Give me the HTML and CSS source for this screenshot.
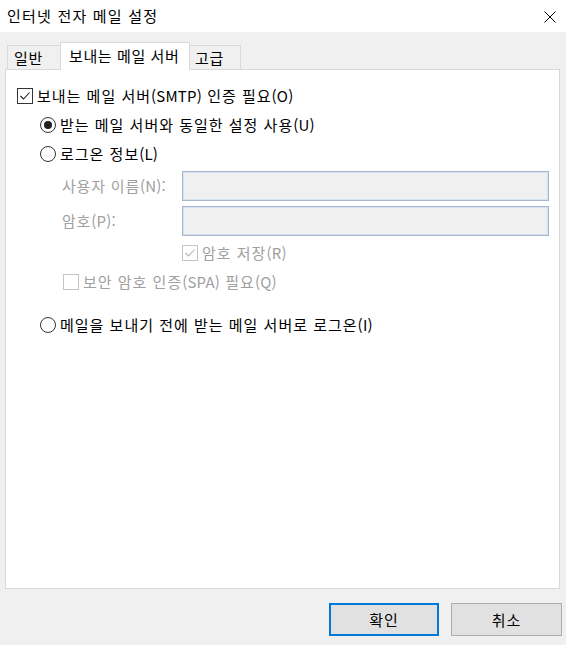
FILE: index.html
```html
<!DOCTYPE html>
<html lang="ko">
<head>
<meta charset="utf-8">
<title>인터넷 전자 메일 설정</title>
<link rel="stylesheet" href="styles.css">
</head>
<body>
<div class="window">
  <div class="titlebar">
    <span class="title">인터넷 전자 메일 설정</span>
    <svg class="close" width="12" height="12" viewBox="0 0 12 12"><path d="M0.5 0.5 L11.5 11.5 M11.5 0.5 L0.5 11.5" stroke="#000" stroke-width="1" fill="none"/></svg>
  </div>
  <div class="tabs">
    <div class="tab tab-general">일반</div>
    <div class="tab tab-active">보내는 메일 서버</div>
    <div class="tab tab-adv">고급</div>
  </div>
  <div class="panel">
    <div class="row row-main">
      <span class="check checked"><svg width="14" height="14" viewBox="0 0 14 14"><path d="M2.5 7 L5.5 10 L11.5 3.5" stroke="#222" stroke-width="1.1" fill="none"/></svg></span>
      <span class="label">보내는 메일 서버<span class="lat">(SMTP)</span> 인증 필요<span class="lat">(O)</span></span>
    </div>
    <div class="row row-radio">
      <span class="radio selected"><span class="dot"></span></span>
      <span class="label">받는 메일 서버와 동일한 설정 사용<span class="lat">(U)</span></span>
    </div>
    <div class="row row-radio">
      <span class="radio"></span>
      <span class="label">로그온 정보<span class="lat">(L)</span></span>
    </div>
    <div class="field field-first">
      <span class="field-label disabled">사용자 이름<span class="lat">(N):</span></span>
      <span class="input"></span>
    </div>
    <div class="field field-second">
      <span class="field-label disabled">암호<span class="lat">(P):</span></span>
      <span class="input"></span>
    </div>
    <div class="row row-save">
      <span class="check dis"><svg width="14" height="14" viewBox="0 0 14 14"><path d="M2.5 7 L5.5 10 L11.5 3.5" stroke="#b4b4b4" stroke-width="1.1" fill="none"/></svg></span>
      <span class="label disabled">암호 저장<span class="lat">(R)</span></span>
    </div>
    <div class="row row-spa">
      <span class="check dis"></span>
      <span class="label disabled">보안 암호 인증<span class="lat">(SPA)</span> 필요<span class="lat">(Q)</span></span>
    </div>
    <div class="row row-radio row-last">
      <span class="radio"></span>
      <span class="label">메일을 보내기 전에 받는 메일 서버로 로그온<span class="lat">(I)</span></span>
    </div>
  </div>
  <div class="buttons">
    <button class="btn btn-default">확인</button>
    <button class="btn">취소</button>
  </div>
</div>
</body>
</html>
```
FILE: styles.css
```css
* { box-sizing: border-box; }
html, body { margin: 0; padding: 0; }
body {
  background: #f0f0f0;
  font-family: "Noto Sans CJK KR", "Noto Sans", sans-serif;
  font-size: 15px;
  color: #000;
}
.window {
  width: 566px;
  height: 645px;
  display: flex;
  flex-direction: column;
  overflow: hidden;
}
.titlebar {
  height: 32px;
  background: #fff;
  display: flex;
  align-items: center;
  justify-content: space-between;
  padding: 0 10px 0 7px;
}
.title {
  font-size: 15px;
  letter-spacing: 1.2px;
  line-height: 20px;
}
.close { display: block; margin-top: 1px; }
.tabs {
  margin-top: 10px;
  padding-left: 7px;
  height: 27px;
  display: flex;
  align-items: flex-end;
  position: relative;
  z-index: 1;
}
.tab {
  height: 24px;
  background: #f0f0f0;
  border: 1px solid #d9d9d9;
  border-bottom: none;
  display: flex;
  align-items: center;
  font-size: 15px;
  letter-spacing: 0.6px;
  line-height: 20px;
}
.tab-general { width: 53px; padding-left: 6px; border-right: none; }
.tab-active {
  width: 130px;
  height: 28px;
  margin-bottom: -1px;
  background: #fff;
  padding-left: 8px;
  padding-bottom: 2px;
}
.tab-adv { width: 51px; padding-left: 5px; border-left: none; }
.panel {
  margin: 0 6px 0 5px;
  height: 520px;
  background: #fff;
  border: 1px solid #d9d9d9;
  padding: 11px 0 0 11px;
  display: flex;
  flex-direction: column;
}
.row {
  height: 29px;
  display: flex;
  align-items: center;
}
.row-radio { padding-left: 23px; }
.label {
  margin-left: 4px;
  letter-spacing: 1px;
  line-height: 20px;
  white-space: nowrap;
}
.lat { letter-spacing: 0.2px; }
.disabled { color: #a0a0a0; }
.check {
  width: 16px;
  height: 16px;
  border: 1px solid #333;
  background: #fff;
  display: flex;
  align-items: center;
  justify-content: center;
  flex: none;
}
.check.dis { border-color: #c4c4c4; }
.check svg { display: block; }
.radio {
  width: 16px;
  height: 16px;
  border: 1px solid #333;
  border-radius: 50%;
  background: #fff;
  display: flex;
  align-items: center;
  justify-content: center;
  flex: none;
}
.dot {
  width: 8px;
  height: 8px;
  border-radius: 50%;
  background: #222;
}
.field {
  height: 30px;
  display: flex;
  align-items: center;
  padding-left: 45px;
}
.field-first { margin-top: 3px; }
.field-second { margin-top: 5px; }
.field-label {
  width: 120px;
  letter-spacing: 0.8px;
  line-height: 20px;
  white-space: nowrap;
}
.input {
  width: 367px;
  height: 30px;
  border: 1px solid #a9b5c8;
  box-shadow: inset 0 0 0 1px #d6e2f0;
  background: #f0f0f0;
}
.row-save { height: 24px; margin-top: 5px; padding-left: 165px; }
.row-spa { height: 24px; margin-top: 5px; padding-left: 46px; }
.row-last { height: 28px; margin-top: 17px; }
.buttons {
  margin-top: 14px;
  display: flex;
  justify-content: flex-end;
  gap: 12px;
  padding-right: 4px;
}
.btn {
  width: 111px;
  height: 33px;
  background: #e1e1e1;
  border: 1px solid #adadad;
  font-family: "Noto Sans CJK KR", "Noto Sans", sans-serif;
  font-size: 15px;
  letter-spacing: 1px;
  color: #000;
  padding: 0;
}
.btn-default {
  width: 110px;
  border: 2px solid #0078d7;
}
```
